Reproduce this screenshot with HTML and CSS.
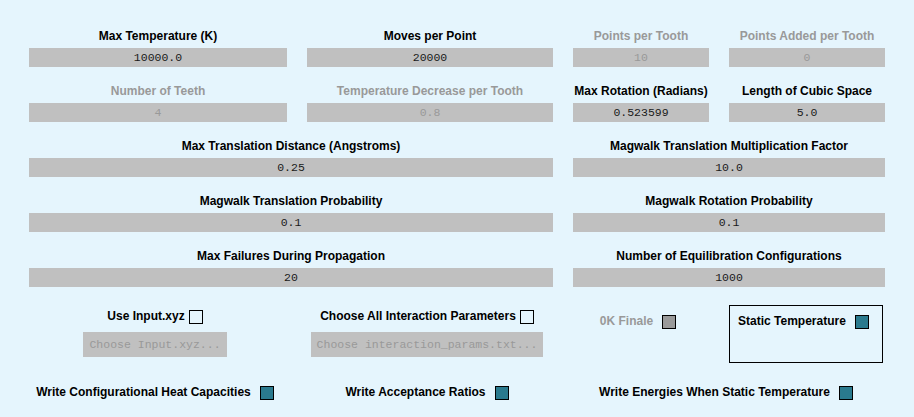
FILE: index.html
```html
<!DOCTYPE html>
<html>
<head>
<meta charset="utf-8">
<link rel="stylesheet" href="styles.css">
</head>
<body>
<div class="page">
  <div class="fields">
    <div class="cell"><div class="label">Max Temperature (K)</div><div class="input">10000.0</div></div>
    <div class="cell"><div class="label">Moves per Point</div><div class="input">20000</div></div>
    <div class="cell off"><div class="label">Points per Tooth</div><div class="input">10</div></div>
    <div class="cell off"><div class="label">Points Added per Tooth</div><div class="input">0</div></div>

    <div class="cell off"><div class="label">Number of Teeth</div><div class="input">4</div></div>
    <div class="cell off"><div class="label">Temperature Decrease per Tooth</div><div class="input">0.8</div></div>
    <div class="cell"><div class="label">Max Rotation (Radians)</div><div class="input">0.523599</div></div>
    <div class="cell"><div class="label">Length of Cubic Space</div><div class="input">5.0</div></div>

    <div class="cell wide"><div class="label">Max Translation Distance (Angstroms)</div><div class="input">0.25</div></div>
    <div class="cell wide"><div class="label">Magwalk Translation Multiplication Factor</div><div class="input">10.0</div></div>

    <div class="cell wide"><div class="label">Magwalk Translation Probability</div><div class="input">0.1</div></div>
    <div class="cell wide"><div class="label">Magwalk Rotation Probability</div><div class="input">0.1</div></div>

    <div class="cell wide"><div class="label">Max Failures During Propagation</div><div class="input">20</div></div>
    <div class="cell wide"><div class="label">Number of Equilibration Configurations</div><div class="input">1000</div></div>
  </div>

  <div class="options">
    <div class="opt">
      <div class="check-row tight"><span class="text">Use Input.xyz</span><span class="box"></span></div>
      <div class="button">Choose Input.xyz...</div>
    </div>
    <div class="opt">
      <div class="check-row tight"><span class="text">Choose All Interaction Parameters</span><span class="box"></span></div>
      <div class="button">Choose interaction_params.txt...</div>
    </div>
    <div class="opt lower">
      <div class="check-row off"><span class="text">0K Finale</span><span class="box grey"></span></div>
    </div>
    <div class="opt group-cell">
      <div class="group">
        <div class="check-row"><span class="text">Static Temperature</span><span class="box on"></span></div>
      </div>
    </div>

    <div class="opt write">
      <div class="check-row"><span class="text">Write Configurational Heat Capacities</span><span class="box on"></span></div>
    </div>
    <div class="opt write">
      <div class="check-row"><span class="text">Write Acceptance Ratios</span><span class="box on"></span></div>
    </div>
    <div class="opt write span2">
      <div class="check-row"><span class="text">Write Energies When Static Temperature</span><span class="box on"></span></div>
    </div>
  </div>
</div>
</body>
</html>
```

FILE: styles.css
```css
html, body {
  margin: 0;
  padding: 0;
}
body {
  background: #e5f5fd;
  font-family: "Liberation Sans", Arial, sans-serif;
  width: 914px;
  height: 417px;
  overflow: hidden;
}
.page {
  padding: 12px 0 0 29px;
}
.fields,
.options {
  display: grid;
  grid-template-columns: 258px 246px 136px 156px;
  column-gap: 20px;
}
.cell {
  display: flex;
  flex-direction: column;
}
.cell.wide {
  grid-column: span 2;
}
.label {
  font-size: 12px;
  font-weight: bold;
  line-height: 14px;
  padding: 17px 0 5px;
  text-align: center;
  color: #000;
}
.input {
  height: 19px;
  line-height: 19px;
  background: #c0c0c0;
  text-align: center;
  font-family: "Liberation Mono", "Courier New", monospace;
  font-size: 11.5px;
  color: #1a1a1a;
}
.off .label,
.off .input,
.off .text {
  color: #999;
}

.options {
  margin-top: 18px;
}
.opt {
  display: flex;
  flex-direction: column;
  align-items: center;
  padding: 5px 6px 0 0;
  height: 71px;
}
.opt.lower {
  padding-top: 10px;
  height: 66px;
}
.opt.group-cell {
  padding: 0;
  align-items: flex-start;
}
.group {
  width: 144px;
  height: 47px;
  border: 1px solid #000;
  padding: 9px 0 0 8px;
}
.opt.write {
  padding-top: 5px;
  height: auto;
}
.span2 {
  grid-column: span 2;
}
.check-row {
  display: flex;
  align-items: flex-start;
  gap: 9px;
}
.check-row.tight {
  gap: 4px;
}
.text {
  font-size: 12px;
  font-weight: bold;
  line-height: 12px;
  color: #000;
  white-space: nowrap;
}
.box {
  width: 12px;
  height: 12px;
  border: 1px solid #000;
  flex: none;
}
.box.on {
  background: #2a7a8e;
}
.box.grey {
  background: #9a9a9a;
}
.button {
  margin-top: 8px;
  height: 25px;
  line-height: 25px;
  padding: 0 6px;
  background: #c0c0c0;
  font-family: "Liberation Mono", "Courier New", monospace;
  font-size: 11.5px;
  color: #999;
  white-space: nowrap;
}
```
